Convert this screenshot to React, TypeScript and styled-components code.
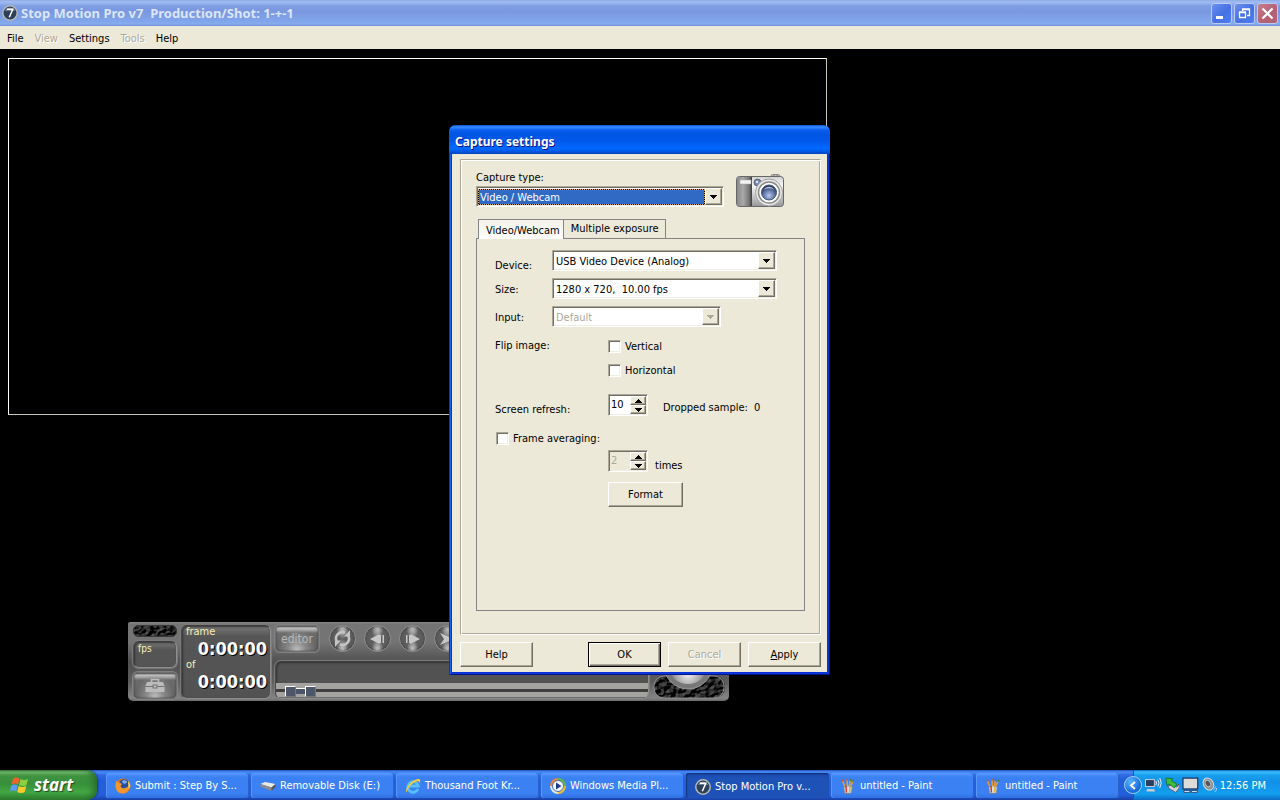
import React from "react";
import styled, { createGlobalStyle, css } from "styled-components";

const face = "#ece9d8";
const uiFont = '"DejaVu Sans Condensed", "DejaVu Sans", "Noto Sans", sans-serif';
const titleFont = '"Noto Sans", "Open Sans", sans-serif';

const GlobalStyle = createGlobalStyle`
  *, *::before, *::after { box-sizing: border-box; }
  body {
    margin: 0;
    background: #000;
    font-family: ${uiFont};
    font-size: 11px;
    line-height: 14px;
    color: #000;
  }
  button, input, select { font: inherit; color: inherit; margin: 0; border-radius: 0; }
`;

/* ---------- main window ---------- */

const Screen = styled.div`
  min-height: 100vh;
  display: flex;
  flex-direction: column;
`;

const TitleBar = styled.header`
  height: 26px;
  display: flex;
  align-items: center;
  gap: 3px;
  padding: 0 2px;
  background: linear-gradient(#8fa9e6 0, #a1bdf2 2px, #7f9ee4 6px, #7a97df 11px, #80a3e9 20px, #86abee 24px, #7690d8 26px);
`;

const AppTitle = styled.h1`
  flex: 1;
  margin: 0;
  font-family: ${titleFont};
  font-size: 13px;
  line-height: 18px;
  font-weight: 700;
  color: #dbe5fa;
  white-space: pre;
`;

const CaptionButtons = styled.div`
  display: flex;
  gap: 2px;
`;

const CaptionButton = styled.button<{ $close?: boolean }>`
  width: 21px;
  height: 21px;
  padding: 0;
  display: grid;
  place-items: center;
  border: 1px solid #b9cbf5;
  border-radius: 3px;
  background: ${(p) =>
    p.$close
      ? "linear-gradient(135deg, #c67c8c, #b46072 60%, #b06476)"
      : "linear-gradient(135deg, #6d90ee, #4570e4 55%, #4f80f2)"};
`;

const MenuBar = styled.nav`
  height: 23px;
  display: flex;
  align-items: center;
  gap: 11px;
  padding: 2px 7px 0;
  background: ${face};
`;

const etched = css`
  color: #aca899;
  text-shadow: 1px 1px 0 #fff;
`;

const MenuItem = styled.button`
  padding: 0;
  border: 0;
  background: none;
  &:disabled { ${etched} }
`;

const Workspace = styled.main`
  flex: 1;
  position: relative;
  display: flex;
  flex-direction: column;
  justify-content: space-between;
  align-items: flex-start;
  padding: 9px 8px 69px;
  background: #000;
`;

const Preview = styled.section`
  width: 64vw;
  height: 357px;
  border: 1px solid #fff;
  border-right-color: #c8c5b4;
  border-bottom-color: #c8c5b4;
`;

/* ---------- playback deck ---------- */

const Deck = styled.section`
  width: 601px;
  height: 79px;
  margin-left: 120px;
  display: flex;
  gap: 4px;
  padding: 3px 4px 2px 5px;
  border-radius: 2px 2px 5px 5px;
  background: linear-gradient(#8a8a8a 0, #747474 2px, #747474 20px, #505050 40px, #5c5c5c 60px, #858585 76px, #6a6a6a);
`;

const DeckSide = styled.div`
  width: 44px;
  display: flex;
  flex-direction: column;
  gap: 4px;
`;

const sunk = css`
  border: 1px solid #8d8d8d;
  border-top-color: #3c3c3c;
  border-left-color: #4a4a4a;
  box-shadow: inset 1px 1px 2px #333, 0 0 1px 1px #7c7c7c;
`;

const Readout = styled.div`
  height: 27px;
  padding: 0 4px;
  border-radius: 6px;
  font-size: 10px;
  color: #f4f2b8;
  background: linear-gradient(#777, #555 8px, #555);
  ${sunk}
`;

const raised = css`
  padding: 0;
  display: grid;
  place-items: center;
  border: 1px solid #6e6e6e;
  background: radial-gradient(ellipse at 50% 100%, #c4c4c4 0, #8a8a8a 30%, transparent 65%),
    linear-gradient(#5a5a5a 0, #c0c0c0 2px, #a8a8a8 4px, #6c6c6c 7px, #626262 100%);
  box-shadow: inset 0 0 2px #333, 0 0 1px 1px #858585;
`;

const DeckButton = styled.button`
  height: 27px;
  width: 44px;
  border-radius: 5px;
  ${raised}
  color: #b8b8b8;
  font-size: 12px;
`;

const RoundButton = styled.button`
  width: 27px;
  height: 27px;
  padding: 0;
  border: 1px solid #8f8f8f;
  border-radius: 50%;
  display: grid;
  place-items: center;
  background: radial-gradient(ellipse at 50% 98%, #d6d6d6 0, #999 18%, transparent 34%),
    radial-gradient(ellipse at 50% 12%, #bdbdbd 0, #999 16%, transparent 34%), #5e5e5e;
  box-shadow: inset 0 0 3px #333;
`;

const Counter = styled.div`
  width: 90px;
  height: 74px;
  padding: 0 3px 0 4px;
  border-radius: 6px;
  background: linear-gradient(#7a7a7a, #565656 10px, #525252);
  ${sunk}
  color: #f4f2b8;
`;

const CounterLabel = styled.div`
  height: 12px;
  line-height: 12px;
`;

const CounterValue = styled.div`
  height: 21px;
  line-height: 21px;
  font-size: 18px;
  font-weight: 700;
  color: #fff;
  text-align: right;
  text-shadow: 1px 1px 0 #000;
`;

const DeckCenter = styled.div`
  flex: 1;
  display: flex;
  flex-direction: column;
  justify-content: space-between;
`;

const Transport = styled.div`
  display: flex;
  gap: 8px;
`;

const EditorSlot = styled.div`
  width: 46px;
`;

const Timeline = styled.div`
  height: 38px;
  display: flex;
  align-items: flex-end;
  border-radius: 6px;
  background: #525252;
  overflow: hidden;
  ${sunk}
`;

const Track = styled.div`
  flex: 1;
  height: 15px;
  padding: 1px 9px 0;
  display: flex;
  align-items: center;
  background: linear-gradient(#a5a3a0 0 6px, #3e3e3e 6px 9px, #a5a3a0 9px 14px, #6c6c6c 14px);
`;

const Marker = styled.span`
  width: 11px;
  height: 11px;
  border: 1px solid #fff;
  border-right-color: #777;
  border-bottom-color: #777;
  background: #4c5668;
`;

const MarkerLink = styled.span`
  width: 9px;
  height: 6px;
  border-top: 1px solid #fff;
  background: #4c5668;
`;

const DeckDial = styled.div`
  width: 72px;
  display: flex;
  align-items: flex-end;
`;

/* ---------- dialog ---------- */

const Dialog = styled.section`
  position: absolute;
  top: 76px;
  left: calc(50% - 191px);
  width: 381px;
  display: flex;
  flex-direction: column;
  border-radius: 7px 7px 0 0;
  background: #0831d9;
  padding: 0 3px 3px;
  box-shadow: inset 1px 0 0 #0a35c8, inset -1px -1px 0 #00138c, inset 2px 0 0 #1a62ee, inset -2px -2px 0 #0a3ad8;
`;

const DialogTitle = styled.h2`
  height: 29px;
  margin: 0 -3px;
  padding: 1px 6px 0;
  border-radius: 7px 7px 0 0;
  font-family: ${titleFont};
  font-size: 12px;
  line-height: 32px;
  font-weight: 700;
  color: #fff;
  text-shadow: 1px 1px 0 #0f1089;
  background: linear-gradient(#0a4fd0 0, #3a8cff 2px, #0a5ff0 5px, #0055e2 9px, #0058ea 16px, #0068ff 23px, #0062f4 25px, #0444c0 29px);
`;

const DialogBody = styled.form`
  padding: 5px 6px 5px 8px;
  background: ${face};
`;

const Group = styled.div`
  border: 1px solid #aca899;
  border-right-color: #fff;
  border-bottom-color: #fff;
  box-shadow: inset 1px 1px 0 #fff, inset -1px -1px 0 #aca899;
  height: 476px;
  padding: 11px 15px 23px;
  display: flex;
  flex-direction: column;
`;

const CaptureRow = styled.div`
  height: 48px;
  display: flex;
  justify-content: space-between;
  padding-right: 20px;
`;

const CaptureField = styled.div`
  width: 248px;
  display: flex;
  flex-direction: column;
  gap: 1px;
`;

const CameraSlot = styled.div`
  padding-top: 2px;
`;

const Caption = styled.label`
  white-space: pre;
`;

const SelectBox = styled.div<{ $width?: number }>`
  position: relative;
  width: ${(p) => (p.$width ? `${p.$width}px` : "100%")};
  height: 21px;
  padding: 2px 1px;
  background: #fff;
  border: 1px solid #aca899;
  border-right-color: #fff;
  border-bottom-color: #fff;
  box-shadow: inset 1px 1px 0 #716f64, inset -1px -1px 0 #f1efe2;
`;

const SelectInput = styled.select<{ $active?: boolean }>`
  appearance: none;
  display: block;
  width: calc(100% - 17px);
  height: 16px;
  padding: 1px 1px 0;
  line-height: 14px;
  border: 1px ${(p) => (p.$active ? "dotted #d8a860" : "solid transparent")};
  background: ${(p) => (p.$active ? "linear-gradient(#316ac5, #316ac5) padding-box, #000 border-box" : "#fff")};
  background-clip: ${(p) => (p.$active ? "padding-box, border-box" : "padding-box")};
  color: ${(p) => (p.$active ? "#fff" : "#000")};
  outline: 0;
  &:disabled { color: #aca899; opacity: 1; }
`;

const bevel = css`
  border: 1px solid #fff;
  border-right-color: #716f64;
  border-bottom-color: #716f64;
  box-shadow: inset -1px -1px 0 #aca899;
  background: ${face};
`;

const SelectArrow = styled.span`
  position: absolute;
  top: 1px;
  right: 1px;
  width: 17px;
  height: 17px;
  padding-top: 1px;
  display: grid;
  place-items: center;
  pointer-events: none;
  ${bevel}
`;

const Tabs = styled.div`
  display: flex;
  align-items: flex-end;
  padding-left: 2px;
  height: 19px;
`;

const Tab = styled.button<{ $active?: boolean }>`
  height: ${(p) => (p.$active ? "20px" : "19px")};
  padding: ${(p) => (p.$active ? "2px 3px 0 7px" : "0 6px 1px 7px")};
  border: 1px solid #848484;
  border-bottom: 0;
  border-right-width: ${(p) => (p.$active ? "0" : "1px")};
  margin-bottom: ${(p) => (p.$active ? "-1px" : "0")};
  z-index: ${(p) => (p.$active ? 1 : 0)};
  background: ${(p) => (p.$active ? `linear-gradient(#f4f2ea, #fcfcfa)` : face)};
`;

const TabPanel = styled.div`
  flex: 1;
  border: 1px solid #848484;
  padding: 11px 18px;
  display: flex;
  flex-direction: column;
`;

const FieldRow = styled.div`
  height: 28px;
  display: grid;
  grid-template-columns: 57px auto;
  align-items: start;
  justify-content: start;
`;

const FieldLabel = styled(Caption)<{ $drop?: boolean }>`
  padding-top: ${(p) => (p.$drop ? "9px" : "5px")};
`;

const OptionRow = styled.div<{ $height: number }>`
  height: ${(p) => p.$height}px;
  display: grid;
  grid-template-columns: 113px auto;
  align-items: start;
  justify-content: start;
`;

const CheckStack = styled.div`
  display: flex;
  flex-direction: column;
  gap: 8px;
  padding-top: 4px;
`;

const CheckLabel = styled.label`
  height: 16px;
  display: flex;
  align-items: flex-end;
  gap: 4px;
`;

const AveragingRow = styled.div`
  height: 20px;
  padding-left: 1px;
`;

const CheckBox = styled.input`
  appearance: none;
  width: 13px;
  height: 13px;
  position: relative;
  background: #fff;
  border: 1px solid #aca899;
  border-right-color: #fff;
  border-bottom-color: #fff;
  box-shadow: inset 1px 1px 0 #716f64, inset -1px -1px 0 #f1efe2;
  ${CheckLabel} > && { margin-bottom: 1px; }
`;

const SpinGroup = styled.div`
  display: flex;
  gap: 7px;
`;

const SpinBox = styled.div<{ $off?: boolean }>`
  width: 40px;
  height: 22px;
  padding: 1px 1px 1px 0;
  display: flex;
  background: ${(p) => (p.$off ? face : "#fff")};
  border: 1px solid #aca899;
  border-right-color: #fff;
  border-bottom-color: #fff;
  box-shadow: inset 1px 1px 0 #716f64, inset -1px -1px 0 #f1efe2;
`;

const SpinInput = styled.input`
  flex: 1;
  min-width: 0;
  height: 16px;
  padding: 0 2px;
  border: 0;
  background: transparent;
  outline: 0;
  &:disabled { color: #aca899; }
`;

const SpinArrows = styled.div`
  width: 16px;
  display: flex;
  flex-direction: column;
`;

const SpinArrow = styled.button`
  height: 9px;
  padding: 0;
  display: grid;
  place-items: center;
  ${bevel}
`;

const SpinNote = styled.span`
  padding-top: 7px;
`;

const DroppedNote = styled(SpinNote)`
  display: flex;
  gap: 6px;
  padding-left: 8px;
`;

const AveragingNote = styled.label`
  padding-top: 9px;
`;

const PushButton = styled.button<{ $primary?: boolean; $wide?: boolean }>`
  width: ${(p) => (p.$wide ? 75 : 73)}px;
  height: 25px;
  padding: 0;
  ${bevel}
  ${(p) =>
    p.$primary &&
    css`
      border: 1px solid #000;
      box-shadow: inset 1px 1px 0 #fff, inset -1px -1px 0 #716f64, inset -2px -2px 0 #aca899;
    `}
  &:disabled { ${etched} }
`;

const ButtonRow = styled.footer`
  display: flex;
  gap: 7px;
  padding-top: 7px;
`;

const Spacer = styled.span`
  flex: 1;
`;

/* ---------- taskbar ---------- */

const TaskBar = styled.footer`
  height: 30px;
  display: flex;
  background: linear-gradient(#1f4fc0 0, #4a8df5 2px, #2f6be4 5px, #245edb 10px, #245edb 25px, #1941a5 30px);
`;

const StartButton = styled.button`
  width: 97px;
  padding: 0 0 1px 10px;
  display: flex;
  align-items: center;
  gap: 5px;
  border: 0;
  border-radius: 0 10px 10px 0;
  background: linear-gradient(#2c6e2c 0, #72b872 2px, #3e9240 6px, #38903a 14px, #42a744 22px, #2b7a2d 30px);
  box-shadow: inset -6px 0 6px -2px #2b702d, 1px 0 2px #16388a;
  color: #fff;
  font-family: ${titleFont};
  font-size: 17px;
  line-height: 24px;
  font-weight: 700;
  font-style: italic;
  text-shadow: 1px 1px 1px #1d4a1e;
`;

const Tasks = styled.div`
  flex: 1;
  display: flex;
  gap: 2px;
  padding: 3px 14px 2px 9px;
`;

const Task = styled.button<{ $active?: boolean }>`
  flex: 1 1 0;
  min-width: 0;
  display: flex;
  align-items: center;
  gap: 4px;
  padding: ${(p) => (p.$active ? "2px 9px 0" : "0 9px")};
  border: 0;
  border-radius: 3px;
  color: #fff;
  white-space: nowrap;
  overflow: hidden;
  background: ${(p) =>
    p.$active ? "linear-gradient(#1a44a0, #1e52b7 5px, #1e52b7)" : "linear-gradient(#5a9bff, #3c81f3 4px, #3c81f3 20px, #3071e2)"};
  box-shadow: ${(p) => (p.$active ? "inset 1px 1px 1px #12327c" : "inset 1px 0 0 #5b97f8, inset -1px 0 0 #2a62cf")};
`;

const Tray = styled.div`
  width: 147px;
  display: flex;
  align-items: center;
  gap: 3px;
  padding-right: 14px;
  color: #fff;
  background: linear-gradient(#0c5fc0 0, #3cc0f8 2px, #18a0ec 5px, #1290e8 12px, #139eee 24px, #0b6ac4 30px);
  border-left: 1px solid #0a5db8;
`;

const TrayToggle = styled.button`
  width: 18px;
  height: 18px;
  padding: 0;
  display: grid;
  place-items: center;
  border: 1px solid #9cd0ff;
  border-radius: 50%;
  background: radial-gradient(circle at 35% 30%, #58b4ff, #1468d8 70%);
  ${Tray} > && { margin-left: -10px; }
`;

const Clock = styled.time`
  margin-left: auto;
  padding-top: 2px;
  white-space: nowrap;
`;

/* ---------- drawings ---------- */

const SevenIcon = () => (
  <svg width="16" height="16" viewBox="0 0 16 16" aria-hidden="true">
    <circle cx="8" cy="8" r="7.2" fill="#2c4058" stroke="#b4b8bc" strokeWidth="1.5" />
    <path d="M3 6a5.500 5.500 0 0 1 10 0z" fill="#6c8298" />
    <path d="M4.800 4.300h6L7.300 12.200" fill="none" stroke="#fff" strokeWidth="1.500" />
  </svg>
);

/* Rough stone relief, lit from the upper left */
const StoneFilter = ({ id, seed }: { id: string; seed: number }) => (
  <filter id={id} x="0" y="0" width="100%" height="100%" colorInterpolationFilters="sRGB">
    <feTurbulence type="fractalNoise" baseFrequency="0.2 0.26" numOctaves={2} seed={seed} />
    <feColorMatrix values="0 0 0 0 0  0 0 0 0 0  0 0 0 0 0  1.4 0 0 0 -0.1" />
    <feDiffuseLighting surfaceScale="3" lightingColor="#787878" diffuseConstant="0.7">
      <feDistantLight azimuth="225" elevation="26" />
    </feDiffuseLighting>
  </filter>
);

const Rock = ({ width, height, id, seed }: { width: number; height: number; id: string; seed: number }) => (
  <svg width={width} height={height} aria-hidden="true">
    <defs>
      <StoneFilter id={id} seed={seed} />
      <clipPath id={`${id}-c`}>
        <rect width={width} height={height} rx={height / 2} />
      </clipPath>
    </defs>
    <g clipPath={`url(#${id}-c)`}>
      <rect width={width} height={height} filter={`url(#${id})`} />
    </g>
    <rect x="0.5" y="0.5" width={width - 1} height={height - 1} rx={height / 2 - 0.5} fill="none" stroke="#3a3a3a" />
  </svg>
);

const Dial = () => (
  <svg width="72" height="72" aria-hidden="true">
    <defs>
      <radialGradient id="dial" cx="50%" cy="75%" r="50%">
        <stop offset="0" stopColor="#f4f2f4" />
        <stop offset="0.6" stopColor="#a8a6a8" />
        <stop offset="1" stopColor="#666" />
      </radialGradient>
      <StoneFilter id="rockdial" seed={8} />
      <clipPath id="dialrock">
        <rect x="1" y="49" width="71" height="22" rx="10" />
      </clipPath>
    </defs>
    <g clipPath="url(#dialrock)">
      <rect width="72" height="72" filter="url(#rockdial)" />
    </g>
    <rect x="1" y="49" width="70" height="22" rx="10" fill="none" stroke="#8d8d8d" />
    <circle cx="35" cy="38" r="24" fill="#777" stroke="#999" />
    <circle cx="35" cy="37" r="20" fill="url(#dial)" />
  </svg>
);

const ToolboxIcon = () => (
  <svg width="20" height="15" viewBox="0 0 20 15" aria-hidden="true">
    <path d="M6.500 4V1.500h7V4" fill="none" stroke="#bcbcbc" strokeWidth="1.600" />
    <path d="M2 4h16l1.500 4v6H.5V8z" fill="#bcbcbc" />
    <path d="M.5 8.500H8m4 0h7.500" stroke="#727272" />
    <rect x="8" y="7" width="4" height="3" fill="none" stroke="#727272" />
  </svg>
);

const LoopIcon = () => (
  <svg width="19" height="19" viewBox="0 0 19 19" aria-hidden="true">
    <path d="M3.800 12.500A6.300 6.300 0 0 1 12 3.800M15.200 6.500A6.300 6.300 0 0 1 7 15.200" fill="none" stroke="#c4c4c4" strokeWidth="2.600" />
    <path d="M17 1v6.500h-6zM2 18v-6.500h6z" fill="#c4c4c4" />
  </svg>
);

const StepIcon = ({ forward }: { forward?: boolean }) => (
  <svg width="15" height="10" viewBox="0 0 15 10" aria-hidden="true">
    {forward ? (
      <path d="M1 1h1.500v8H1zM4 1h1.500v8H4zM5.500 0L15 5 5.500 10z" fill="#c8c8c8" />
    ) : (
      <path d="M14 1h-1.500v8H14zM11 1H9.500v8H11zM9.500 0L0 5l9.500 5z" fill="#c8c8c8" />
    )}
  </svg>
);

const EndIcon = () => (
  <svg width="15" height="12" viewBox="0 0 15 12" aria-hidden="true">
    <path d="M0 0l14 6-14 6 4-6z" fill="#c8c8c8" />
  </svg>
);

const Triangle = ({ up, color = "#000" }: { up?: boolean; color?: string }) => (
  <svg width="7" height="4" viewBox="0 0 7 4" shapeRendering="crispEdges" aria-hidden="true">
    <path d={up ? "M0 4h7L3.500 0z" : "M0 0h7L3.500 4z"} fill={color} />
  </svg>
);

const CameraIcon = () => (
  <svg width="50" height="36" viewBox="0 0 50 36" aria-hidden="true">
    <defs>
      <linearGradient id="cam-body" x1="0" x2="0" y1="0" y2="1">
        <stop offset="0" stopColor="#d0d0d0" />
        <stop offset="0.3" stopColor="#f8f8f8" />
        <stop offset="1" stopColor="#989898" />
      </linearGradient>
      <linearGradient id="cam-grip" x1="0" x2="1">
        <stop offset="0" stopColor="#888" />
        <stop offset="0.4" stopColor="#aaa" />
        <stop offset="0.8" stopColor="#777" />
        <stop offset="1" stopColor="#3a3a3a" />
      </linearGradient>
      <radialGradient id="cam-lens" cx="50%" cy="70%" r="60%">
        <stop offset="0" stopColor="#b8c8e8" />
        <stop offset="0.5" stopColor="#6e84b4" />
        <stop offset="1" stopColor="#2c3c64" />
      </radialGradient>
    </defs>
    <rect x="36" y="1.500" width="9" height="5" rx="2" fill="#c4c4c4" stroke="#888" />
    <path d="M39 2v3M42 2v3" stroke="#777" />
    <rect x="1.500" y="3.500" width="47" height="30" rx="3" fill="url(#cam-body)" stroke="#666" />
    <path d="M2 6a2 2 0 0 1 2-2h13v29H4a2 2 0 0 1-2-2z" fill="url(#cam-grip)" />
    <rect x="5" y="7" width="11" height="4" fill="#f4f4f4" stroke="#aaa" strokeWidth="0.500" />
    <circle cx="22.500" cy="9.500" r="3.500" fill="#7486ac" stroke="#667" />
    <circle cx="22" cy="9" r="1.200" fill="#dce6fa" />
    <circle cx="34" cy="19.500" r="13.500" fill="#e8e8e8" stroke="#a0a0a0" />
    <circle cx="34" cy="19.500" r="10.500" fill="#fff" stroke="#888" strokeWidth="1.500" />
    <circle cx="34" cy="19.500" r="7.500" fill="url(#cam-lens)" stroke="#445070" />
    <path d="M29 16.500a6 6 0 0 1 10 0 12 12 0 0 0-10 0z" fill="#b4c2de" />
  </svg>
);

const MinimizeIcon = () => (
  <svg width="13" height="13" aria-hidden="true">
    <rect x="1" y="9" width="7" height="3" fill="#fff" />
  </svg>
);

const RestoreIcon = () => (
  <svg width="13" height="13" aria-hidden="true">
    <path d="M4.500 4V2.500h7v6H9M4 2h8" fill="none" stroke="#fff" strokeWidth="1.300" />
    <path d="M1.500 5.500h6v5h-6zM1 5h7" fill="none" stroke="#fff" strokeWidth="1.300" />
  </svg>
);

const CloseIcon = () => (
  <svg width="13" height="13" aria-hidden="true">
    <path d="M1.500 1.500l10 10M11.500 1.500l-10 10" stroke="#fff" strokeWidth="2.200" />
  </svg>
);

const WindowsFlag = () => (
  <svg width="19" height="18" viewBox="0 0 19 18" aria-hidden="true">
    <path d="M3 2.500c2-1.300 4-1.300 6.500 0L8 8.500c-2-1.200-4-1.200-6.500 0z" fill="#f0642c" />
    <path d="M10.500 3c2.500 1.300 4.500 1.300 7.500 0l-1.500 6c-2.500 1.200-5 1.200-7.500 0z" fill="#8cd040" />
    <path d="M1.200 9.500c2.300-1.200 4.300-1.200 6.500 0l-1.500 6c-2.200-1.200-4.200-1.200-6.200 0z" fill="#5c9cf4" />
    <path d="M8.700 10c2.500 1.300 4.800 1.300 7.500 0l-1.500 6c-2.500 1.300-5 1.300-7.500 0z" fill="#fccc2c" />
  </svg>
);

const FirefoxIcon = () => (
  <svg width="16" height="16" viewBox="0 0 16 16" aria-hidden="true">
    <circle cx="8" cy="8" r="7.500" fill="#e4701c" />
    <circle cx="9" cy="6.500" r="5.300" fill="#2a4f9c" />
    <path d="M7 3c2-1.500 5-.5 5 1.500L9.500 6 7.500 4.500z" fill="#7fb2ea" />
    <path d="M1 3c1 1 2 .5 3.500 1.500L7 6 5.500 8c1 3 5 3.500 9.500-1-.5 5-3.500 8.500-7.500 8.500S.5 12 .5 8z" fill="#f4962c" />
    <path d="M13 3c2 2 2.500 4 2 6l-1.500 1.500z" fill="#fcd444" />
  </svg>
);

const DriveIcon = () => (
  <svg width="16" height="16" viewBox="0 0 16 16" aria-hidden="true">
    <path d="M.5 6L5 4l10.500 2-4 3.500z" fill="#eceae4" />
    <path d="M.5 6l11 3.500V13L.5 8.500z" fill="#8c8c88" />
    <path d="M11.500 9.500l4-3.500v3l-4 4z" fill="#55565a" />
  </svg>
);

const ExplorerIcon = () => (
  <svg width="16" height="16" viewBox="0 0 16 16" aria-hidden="true">
    <path d="M13 11a5.300 5.300 0 1 1 .3-3H4" fill="none" stroke="#56c0f8" strokeWidth="2.800" />
    <path d="M1.500 14.500C-1 11 7 1.500 13 1c3 0 2.500 2 1.500 4C14 2 10 3 6 7c-3 3-4 6-4.500 7.500z" fill="#f8cc34" />
  </svg>
);

const MediaIcon = () => (
  <svg width="16" height="16" viewBox="0 0 16 16" aria-hidden="true">
    <path d="M8 0a8 8 0 0 0-8 8h8z" fill="#e88434" />
    <path d="M8 0a8 8 0 0 1 8 8H8z" fill="#68b444" />
    <path d="M0 8a8 8 0 0 0 8 8V8z" fill="#dce4f4" />
    <path d="M16 8a8 8 0 0 1-8 8V8z" fill="#f0c034" />
    <circle cx="8" cy="8" r="5.500" fill="#f4f8ff" stroke="#5070b0" />
    <path d="M6 4.500L11.500 8 6 11.500z" fill="#1c3c8c" />
  </svg>
);

const PaintIcon = () => (
  <svg width="16" height="16" viewBox="0 0 16 16" aria-hidden="true">
    <path d="M5 9L2.500 3M7.500 9L7 2M9 9l1.500-7M10.500 9L13 3" stroke="#e0a040" strokeWidth="1.500" />
    <path d="M1.500 3.500L2 1l2 2zM6 2.500L7 0l1 2.500z" fill="#d84824" />
    <path d="M12 4l1-3 1.500 2zM9.500 3l1-3 1 3z" fill="#4c7c34" />
    <path d="M3.500 8.500h9L11.500 15.500h-7z" fill="#b8c8dc" stroke="#66788c" strokeWidth="0.700" />
    <path d="M6 8l.5 6.500" stroke="#d83824" strokeWidth="1.400" />
    <path d="M8 8v6.500" stroke="#f4f4f4" strokeWidth="1" />
    <path d="M10 8l-.5 6.500" stroke="#e8b430" strokeWidth="1.400" />
  </svg>
);

const NetworkIcon = () => (
  <svg width="17" height="16" viewBox="0 0 17 16" aria-hidden="true">
    <rect x="0.500" y="2.500" width="9" height="7" fill="#2c3c5c" stroke="#c8d0dc" />
    <path d="M2 12h7l1.500 2.500h-9z" fill="#c8ccd0" />
    <path d="M11 4q1.500 2 0 4M13 2.500q2.500 3.500 0 7M15 1q3 5 0 10" fill="none" stroke="#e8f0f8" />
  </svg>
);

const EjectIcon = () => (
  <svg width="15" height="16" viewBox="0 0 15 16" aria-hidden="true">
    <path d="M3 9l4-1 5 2 2-3 .5 4-3.500 4.500-7-4z" fill="#d0d4d8" stroke="#445" strokeWidth="0.700" />
    <path d="M1 1l7 .5-1.500 2L12 7l-2.500 4-5.500-4L2 8.500z" fill="#3cbc3c" stroke="#146414" strokeWidth="0.700" />
  </svg>
);

const DisplayIcon = () => (
  <svg width="17" height="16" viewBox="0 0 17 16" aria-hidden="true">
    <rect x="1" y="1" width="15" height="11" fill="#dcdcd8" stroke="#1c2c5c" strokeWidth="1.200" />
    <path d="M2 13.500h6v2H2zM9.500 13.500h6v2h-6z" fill="#e8eef8" stroke="#1c2c5c" strokeWidth="0.800" />
  </svg>
);

const SpeakerIcon = () => (
  <svg width="15" height="16" viewBox="0 0 15 16" aria-hidden="true">
    <ellipse cx="6.500" cy="7" rx="5" ry="6.500" fill="#8c9094" stroke="#d8dcdc" transform="rotate(-30 6.500 7)" />
    <ellipse cx="6" cy="6.500" rx="2.500" ry="3.500" fill="#50565c" stroke="#b8bcc0" transform="rotate(-30 6 6.500)" />
    <path d="M11.500 13q2-1 2-3.500M13 15q2-1.500 2-4" fill="none" stroke="#a4d4fc" />
  </svg>
);

/* ---------- composed controls ---------- */

type DropDownProps = {
  id: string;
  value: string;
  width?: number;
  active?: boolean;
  disabled?: boolean;
};

const DropDown = ({ id, value, width, active, disabled }: DropDownProps) => (
  <SelectBox $width={width}>
    <SelectInput id={id} $active={active} disabled={disabled} defaultValue={value}>
      <option value={value}>{value}</option>
    </SelectInput>
    <SelectArrow>
      <Triangle color={disabled ? "#aca899" : "#000"} />
    </SelectArrow>
  </SelectBox>
);

const Spinner = ({ id, value, disabled }: { id: string; value: string; disabled?: boolean }) => (
  <SpinBox $off={disabled}>
    <SpinInput id={id} type="text" inputMode="numeric" defaultValue={value} disabled={disabled} />
    <SpinArrows>
      <SpinArrow type="button" aria-label="Increase">
        <Triangle up />
      </SpinArrow>
      <SpinArrow type="button" aria-label="Decrease">
        <Triangle />
      </SpinArrow>
    </SpinArrows>
  </SpinBox>
);

const tasks = [
  { title: "Submit : Step By S...", Icon: FirefoxIcon },
  { title: "Removable Disk (E:)", Icon: DriveIcon },
  { title: "Thousand Foot Kr...", Icon: ExplorerIcon },
  { title: "Windows Media Pl...", Icon: MediaIcon },
  { title: "Stop Motion Pro v...", Icon: SevenIcon, active: true },
  { title: "untitled - Paint", Icon: PaintIcon },
  { title: "untitled - Paint", Icon: PaintIcon },
];

const PlaybackDeck = () => (
  <Deck aria-label="Playback">
    <DeckSide>
      <Rock width={44} height={12} id="rock" seed={4} />
      <Readout>fps</Readout>
      <DeckButton type="button" aria-label="Toolbox">
        <ToolboxIcon />
      </DeckButton>
    </DeckSide>
    <Counter>
      <CounterLabel>frame</CounterLabel>
      <CounterValue>0:00:00</CounterValue>
      <CounterLabel>of</CounterLabel>
      <CounterValue>0:00:00</CounterValue>
    </Counter>
    <DeckCenter>
      <Transport>
        <EditorSlot>
          <DeckButton type="button">editor</DeckButton>
        </EditorSlot>
        <RoundButton type="button" aria-label="Loop">
          <LoopIcon />
        </RoundButton>
        <RoundButton type="button" aria-label="Step back">
          <StepIcon />
        </RoundButton>
        <RoundButton type="button" aria-label="Step forward">
          <StepIcon forward />
        </RoundButton>
        <RoundButton type="button" aria-label="Go to end">
          <EndIcon />
        </RoundButton>
      </Transport>
      <Timeline>
        <Track>
          <Marker />
          <MarkerLink />
          <Marker />
        </Track>
      </Timeline>
    </DeckCenter>
    <DeckDial>
      <Dial />
    </DeckDial>
  </Deck>
);

const CaptureDialog = () => (
  <Dialog role="dialog" aria-labelledby="dialog-title">
    <DialogTitle id="dialog-title">Capture settings</DialogTitle>
    <DialogBody onSubmit={(e) => e.preventDefault()}>
      <Group>
        <CaptureRow>
          <CaptureField>
            <Caption htmlFor="capture-type">Capture type:</Caption>
            <DropDown id="capture-type" value="Video / Webcam" active />
          </CaptureField>
          <CameraSlot>
            <CameraIcon />
          </CameraSlot>
        </CaptureRow>
        <Tabs role="tablist">
          <Tab type="button" role="tab" aria-selected="true" $active>
            Video/Webcam
          </Tab>
          <Tab type="button" role="tab" aria-selected="false">
            Multiple exposure
          </Tab>
        </Tabs>
        <TabPanel role="tabpanel">
          <FieldRow>
            <FieldLabel htmlFor="device" $drop>Device:</FieldLabel>
            <DropDown id="device" value="USB Video Device (Analog)" width={225} />
          </FieldRow>
          <FieldRow>
            <FieldLabel htmlFor="size">Size:</FieldLabel>
            <DropDown id="size" value={"1280 x 720,\u00a0 10.00 fps"} width={225} />
          </FieldRow>
          <FieldRow>
            <FieldLabel htmlFor="input">Input:</FieldLabel>
            <DropDown id="input" value="Default" width={169} disabled />
          </FieldRow>
          <OptionRow $height={60}>
            <FieldLabel as="span">Flip image:</FieldLabel>
            <CheckStack>
              <CheckLabel>
                <CheckBox type="checkbox" />
                Vertical
              </CheckLabel>
              <CheckLabel>
                <CheckBox type="checkbox" />
                Horizontal
              </CheckLabel>
            </CheckStack>
          </OptionRow>
          <OptionRow $height={36}>
            <FieldLabel htmlFor="refresh" $drop>Screen refresh:</FieldLabel>
            <SpinGroup>
              <Spinner id="refresh" value="10" />
              <DroppedNote>
                <span>Dropped sample:</span>
                <span>0</span>
              </DroppedNote>
            </SpinGroup>
          </OptionRow>
          <AveragingRow>
            <CheckLabel>
              <CheckBox type="checkbox" />
              Frame averaging:
            </CheckLabel>
          </AveragingRow>
          <OptionRow $height={32}>
            <span />
            <SpinGroup>
              <Spinner id="averaging" value="2" disabled />
              <AveragingNote htmlFor="averaging">times</AveragingNote>
            </SpinGroup>
          </OptionRow>
          <OptionRow $height={25}>
            <span />
            <PushButton type="button" $wide>Format</PushButton>
          </OptionRow>
        </TabPanel>
      </Group>
      <ButtonRow>
        <PushButton type="button">Help</PushButton>
        <Spacer />
        <PushButton type="submit" $primary>OK</PushButton>
        <PushButton type="button" disabled>Cancel</PushButton>
        <PushButton type="button"><u>A</u>pply</PushButton>
      </ButtonRow>
    </DialogBody>
  </Dialog>
);

export default function App() {
  return (
    <Screen>
      <GlobalStyle />
      <TitleBar>
        <SevenIcon />
        <AppTitle>{"Stop Motion Pro v7  Production/Shot: 1-+-1"}</AppTitle>
        <CaptionButtons>
          <CaptionButton type="button" aria-label="Minimize"><MinimizeIcon /></CaptionButton>
          <CaptionButton type="button" aria-label="Restore"><RestoreIcon /></CaptionButton>
          <CaptionButton type="button" aria-label="Close" $close><CloseIcon /></CaptionButton>
        </CaptionButtons>
      </TitleBar>
      <MenuBar>
        <MenuItem type="button">File</MenuItem>
        <MenuItem type="button" disabled>View</MenuItem>
        <MenuItem type="button">Settings</MenuItem>
        <MenuItem type="button" disabled>Tools</MenuItem>
        <MenuItem type="button">Help</MenuItem>
      </MenuBar>
      <Workspace>
        <Preview aria-label="Preview" />
        <PlaybackDeck />
        <CaptureDialog />
      </Workspace>
      <TaskBar>
        <StartButton type="button">
          <WindowsFlag />
          start
        </StartButton>
        <Tasks>
          {tasks.map(({ title, Icon, active }, i) => (
            <Task key={i} type="button" $active={active}>
              <Icon />
              {title}
            </Task>
          ))}
        </Tasks>
        <Tray>
          <TrayToggle type="button" aria-label="Show hidden icons">
            <svg width="8" height="9" aria-hidden="true">
              <path d="M6 1L2 4.500 6 8" fill="none" stroke="#fff" strokeWidth="2" />
            </svg>
          </TrayToggle>
          <NetworkIcon />
          <EjectIcon />
          <DisplayIcon />
          <SpeakerIcon />
          <Clock>12:56 PM</Clock>
        </Tray>
      </TaskBar>
    </Screen>
  );
}
